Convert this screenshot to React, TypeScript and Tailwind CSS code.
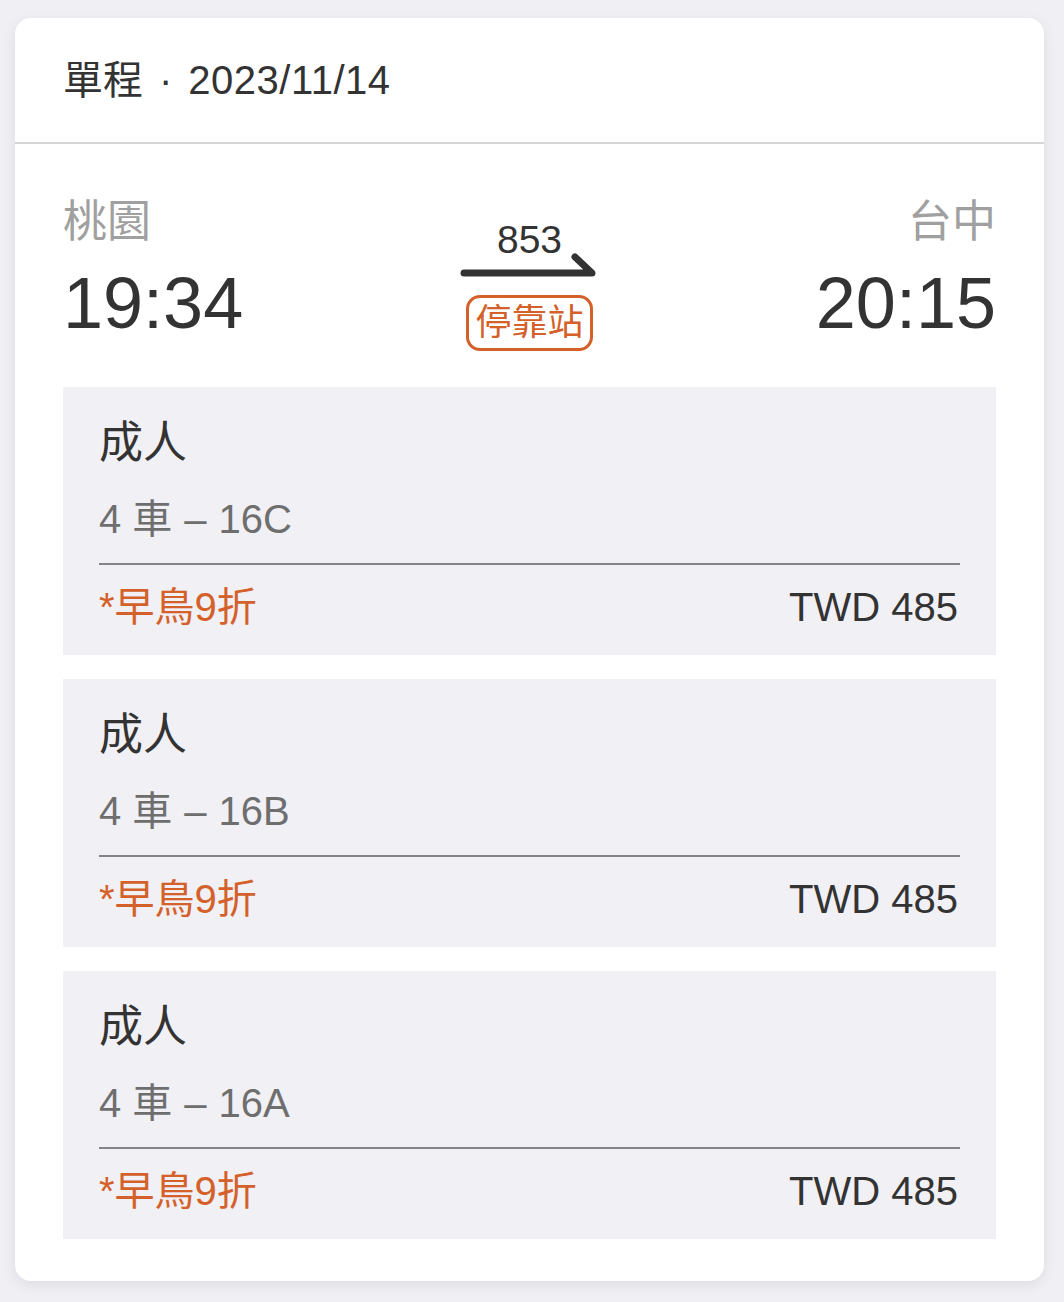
import React from "react";

const font = { fontFamily: '"Liberation Sans", "Noto Sans CJK TC", sans-serif' };

const tickets = ["16C", "16B", "16A"];

function Arrow() {
  return (
    <svg width="140" height="28" viewBox="0 0 140 28" className="mt-[-6px] block" fill="none">
      <path d="M4 21 H132 L115 5" stroke="#333333" strokeWidth="7" strokeLinecap="round" strokeLinejoin="round" />
    </svg>
  );
}

export default function App() {
  return (
    <div className="min-h-[1302px] w-[1064px] bg-[#f0eff4] pt-[18px] pl-[15px]" style={font}>
      <div className="w-[1029px] rounded-[16px] bg-white shadow-[0_4px_14px_rgba(0,0,0,0.08)]">
        <div className="flex h-[126px] items-center border-b-2 border-[#d6d6d8] pl-[48px] text-[40px] text-[#333333]">
          <span>單程</span>
          <span className="mx-[16px]">·</span>
          <span className="tracking-[0.5px]">2023/11/14</span>
        </div>
        <div className="px-[48px] pt-[50px] pb-[42px]">
          <div className="grid grid-cols-[1fr_auto_1fr] items-start">
            <div className="flex flex-col items-start">
              <div className="text-[44px] leading-[56px] text-[#a0a0a0]">桃園</div>
              <div className="mt-[13px] text-[72px] leading-[80px] text-[#333333]">19:34</div>
            </div>
            <div className="mt-[28px] flex flex-col items-center">
              <div className="text-[39px] leading-[36px] text-[#333333]">853</div>
              <Arrow />
              <div className="mt-[15px] rounded-[14px] border-[3px] border-[#d4602a] px-[6px] text-[36px] leading-[50px] text-[#d4602a]">
                停靠站
              </div>
            </div>
            <div className="flex flex-col items-end">
              <div className="text-[44px] leading-[56px] text-[#a0a0a0]">台中</div>
              <div className="mt-[13px] text-[72px] leading-[80px] text-[#333333]">20:15</div>
            </div>
          </div>
          <div className="mt-[36px] flex flex-col gap-[24px]">
            {tickets.map((seat) => (
              <div key={seat} className="bg-[#f1f0f5] px-[36px] pt-[24px] pb-[24px]">
                <div className="text-[44px] leading-[64px] text-[#333333]">成人</div>
                <div className="mt-[20px] text-[40px] leading-[48px] text-[#6e6e6e]">
                  4 車<span className="mx-[12px]">–</span>{seat}
                </div>
                <div className="mt-[20px] h-[2px] bg-[#858585]" />
                <div className="mt-[18px] flex items-center justify-between text-[40px] leading-[48px]">
                  <span className="text-[#d4602a]">*早鳥9折</span>
                  <span className="mr-[2px] text-[#333333]">TWD 485</span>
                </div>
              </div>
            ))}
          </div>
        </div>
      </div>
    </div>
  );
}
